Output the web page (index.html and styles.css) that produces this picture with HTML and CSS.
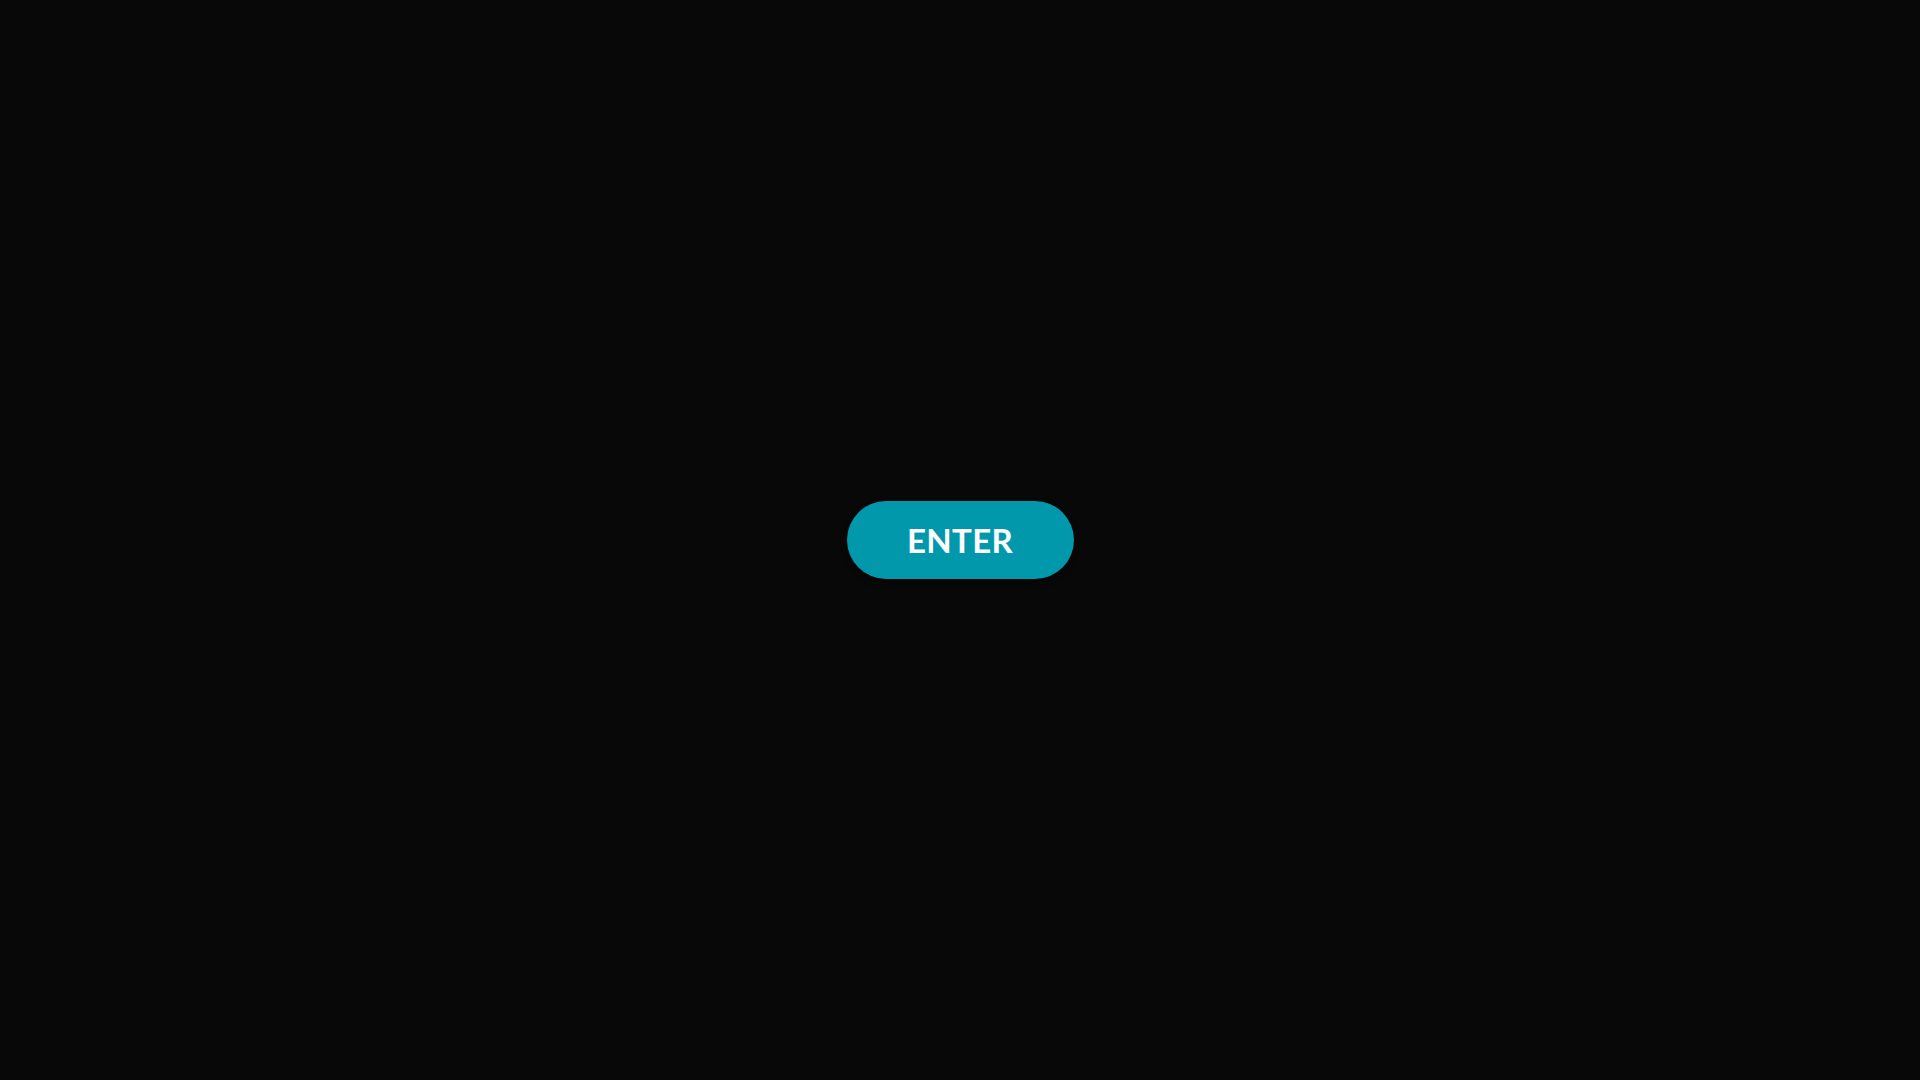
FILE: index.html
```html
<!DOCTYPE html>
<html lang="en">
<head>
    <meta charset="UTF-8">
    <meta name="viewport" content="width=device-width, initial-scale=1.0">
    <title>Enter</title>
    <link rel="stylesheet" href="styles.css">
</head>
<body>
    <main class="splash">
        <button class="enter-btn" type="button">ENTER</button>
    </main>
</body>
</html>
```

FILE: styles.css
```css
html, body {
    margin: 0;
    padding: 0;
    height: 100%;
}
body {
    background-color: #080808;
    font-family: "Lato", "Open Sans", Arial, sans-serif;
}
.splash {
    height: 100vh;
    display: flex;
    align-items: center;
    justify-content: center;
}
.enter-btn {
    width: 227px;
    height: 78px;
    border: none;
    border-radius: 39px;
    background-color: #0298ab;
    color: #ffffff;
    font-family: inherit;
    font-size: 33px;
    font-weight: 700;
    letter-spacing: 0.3px;
    padding: 0 0 1px;
    cursor: pointer;
    box-shadow: 0 3px 6px rgba(0, 0, 0, 0.4);
}
.enter-btn:hover {
    background-color: #03a6ba;
}
```
